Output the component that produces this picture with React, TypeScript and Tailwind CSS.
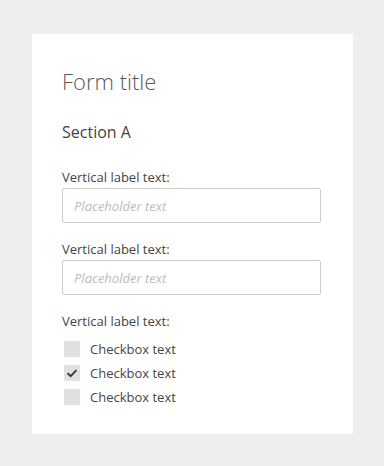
import React from 'react';

const font = { fontFamily: '"Open Sans", "Liberation Sans", sans-serif' };

function Field({ label }: { label: string }) {
  return (
    <div className="flex flex-col">
      <label className="text-[13px] leading-[18px] text-[#444]">{label}</label>
      <input
        type="text"
        placeholder="Placeholder text"
        className="mt-[2px] h-[35px] w-[259px] rounded-[2px] border border-[#cccccc] bg-white px-[11px] text-[13px] italic text-[#444] outline-none placeholder:text-[#bbbbbb]"
      />
    </div>
  );
}

function Checkbox({ label, checked = false }: { label: string; checked?: boolean }) {
  return (
    <label className="flex h-[24px] items-center gap-[10px] pl-[2px]">
      <span className="flex h-[16px] w-[16px] items-center justify-center rounded-[2px] bg-[#e0e0e0]">
        {checked && (
          <svg viewBox="0 0 16 16" className="h-[16px] w-[16px]" fill="none">
            <path d="M3.5 8.2 L6.6 11.2 L12.5 5.2" stroke="#333" strokeWidth="1.8" />
          </svg>
        )}
      </span>
      <span className="text-[13px] leading-[18px] text-[#444]">{label}</span>
    </label>
  );
}

export default function App() {
  return (
    <div className="min-h-[466px] bg-[#eeeeee] pl-[32px] pt-[34px]" style={font}>
      <form className="w-[321px] bg-white px-[30px] pb-[25px] pt-[32px]">
        <h1 className="text-[22px] font-light leading-[30px] text-[#5a5a5a]">Form title</h1>
        <h2 className="mt-[25px] text-[16px] leading-[22px] text-[#444]">Section A</h2>

        <div className="mt-[25px] flex flex-col gap-[17px]">
          <Field label="Vertical label text:" />
          <Field label="Vertical label text:" />
          <div className="flex flex-col">
            <span className="text-[13px] leading-[18px] text-[#444]">Vertical label text:</span>
            <div className="mt-[7px] flex flex-col">
              <Checkbox label="Checkbox text" />
              <Checkbox label="Checkbox text" checked />
              <Checkbox label="Checkbox text" />
            </div>
          </div>
        </div>
      </form>
    </div>
  );
}
